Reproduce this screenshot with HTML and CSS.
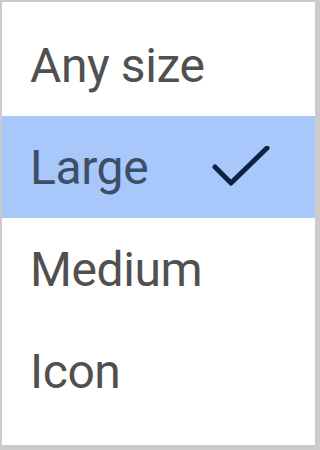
FILE: index.html
```html
<!DOCTYPE html>
<html>
<head>
<meta charset="utf-8">
<link rel="stylesheet" href="styles.css">
</head>
<body>
<div class="menu">
  <div class="item">Any size</div>
  <div class="item selected">Large
    <svg class="check" width="60" height="45" viewBox="0 0 60 45"><polyline points="3,21 19,37 55,2" fill="none" stroke="#0e2242" stroke-width="5" stroke-linejoin="round" stroke-linecap="round"/></svg>
  </div>
  <div class="item">Medium</div>
  <div class="item">Icon</div>
</div>
</body>
</html>
```
FILE: styles.css
```css
html, body { margin: 0; padding: 0; }
body {
  width: 320px;
  height: 450px;
  background: #cbcbcb;
  font-family: Roboto, "Liberation Sans", Arial, sans-serif;
  overflow: hidden;
}
.menu {
  margin: 2px 5px 5px 2px;
  height: 443px;
  background: #fff;
  padding-top: 12px;
  box-sizing: border-box;
}
.item {
  height: 102px;
  display: flex;
  align-items: center;
  justify-content: space-between;
  padding: 0 43px 0 28px;
  font-size: 48px;
  letter-spacing: -0.4px;
  color: #505050;
  box-sizing: border-box;
}
.item.selected {
  background: #a8c7fa;
  color: #3e4e67;
}
.check {
  margin-top: 2px;
}
```
